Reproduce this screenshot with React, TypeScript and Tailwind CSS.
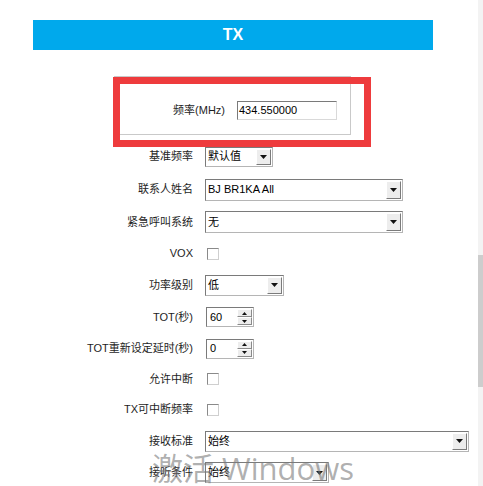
import React from 'react';

type Row =
  | { label: string; h: string; kind: 'select'; value: string; w: string; sh: string }
  | { label: string; h: string; kind: 'spin'; value: string }
  | { label: string; h: string; kind: 'check' };

// row heights follow the reference's spacing between row centres
const ROWS: Row[] = [
  { label: '基准频率', h: 'h-[33px]', kind: 'select', value: '默认值', w: 'w-[68px]', sh: 'h-[20px]' },
  { label: '联系人姓名', h: 'h-[33px]', kind: 'select', value: 'BJ BR1KA All', w: 'w-[198px]', sh: 'h-[22px]' },
  { label: '紧急呼叫系统', h: 'h-[32px]', kind: 'select', value: '无', w: 'w-[198px]', sh: 'h-[22px]' },
  { label: 'VOX', h: 'h-[31px]', kind: 'check' },
  { label: '功率级别', h: 'h-[32px]', kind: 'select', value: '低', w: 'w-[79px]', sh: 'h-[21px]' },
  { label: 'TOT(秒)', h: 'h-[32px]', kind: 'spin', value: '60' },
  { label: 'TOT重新设定延时(秒)', h: 'h-[31px]', kind: 'spin', value: '0' },
  { label: '允许中断', h: 'h-[30px]', kind: 'check' },
  { label: 'TX可中断频率', h: 'h-[31px]', kind: 'check' },
  { label: '接收标准', h: 'h-[32px]', kind: 'select', value: '始终', w: 'w-[264px]', sh: 'h-[21px]' },
  { label: '接听条件', h: 'h-[31px]', kind: 'select', value: '始终', w: 'w-[124px]', sh: 'h-[21px]' },
];

function Arrow({ up = false, small = false }: { up?: boolean; small?: boolean }) {
  const w = small ? 5 : 7;
  const h = small ? 3 : 4;
  return (
    <svg width={w} height={h} viewBox={`0 0 ${w} ${h}`}>
      <path d={up ? `M0 ${h}H${w}L${w / 2} 0Z` : `M0 0H${w}L${w / 2} ${h}Z`} fill="#111" />
    </svg>
  );
}

function Select({ value, w, sh }: { value: string; w: string; sh: string }) {
  return (
    <div
      className={`flex ${w} ${sh} border border-t-[#7a7a7a] border-l-[#7a7a7a] border-r-[#b5b5b5] border-b-[#b5b5b5] bg-white`}
    >
      <span className="flex flex-1 items-center overflow-hidden whitespace-nowrap pl-[2px] text-[11px] text-black">
        {value}
      </span>
      <span className="m-px flex w-[15px] items-center justify-center border border-t-white border-l-white border-r-[#7b7b7b] border-b-[#7b7b7b] bg-[#ededed]">
        <Arrow />
      </span>
    </div>
  );
}

function Spin({ value }: { value: string }) {
  return (
    <div className="ml-px flex h-[20px] w-[48px] border border-t-[#7a7a7a] border-l-[#7a7a7a] border-r-[#b5b5b5] border-b-[#b5b5b5] bg-white">
      <span className="flex flex-1 items-center pl-[3px] text-[11px] text-black">{value}</span>
      <div className="m-px flex w-[15px] flex-col">
        <span className="flex flex-1 items-center justify-center border border-t-white border-l-white border-r-[#8a8a8a] border-b-[#8a8a8a] bg-[#ededed]">
          <Arrow up small />
        </span>
        <span className="flex flex-1 items-center justify-center border border-t-white border-l-white border-r-[#8a8a8a] border-b-[#8a8a8a] bg-[#ededed]">
          <Arrow small />
        </span>
      </div>
    </div>
  );
}

function Check() {
  return (
    <span className="ml-[2px] block h-[12px] w-[12px] border border-t-[#8a8a8a] border-l-[#8a8a8a] border-r-[#cfcfcf] border-b-[#cfcfcf] bg-white" />
  );
}

export default function App() {
  return (
    <div className="relative flex h-[486px] w-[483px] overflow-hidden bg-white font-['Liberation_Sans','Noto_Sans_CJK_SC',sans-serif] text-[#1e1e1e]">
      <div className="w-[478px]">
        {/* TX header */}
        <div className="ml-[33px] mt-[20px] flex h-[30px] w-[400px] items-center justify-center bg-[#00a9ec]">
          <span className="text-[16px] font-bold text-white">TX</span>
        </div>

        {/* frequency box */}
        <div className="ml-[114px] mt-[26px] h-[59px] w-[237px] border border-[#c9c9c9] pt-[24px]">
          <div className="flex items-center">
            <span className="w-[110px] text-right text-[11px]">频率(MHz)</span>
            <div className="ml-[12px] flex h-[19px] w-[100px] items-center border border-t-[#7a7a7a] border-l-[#7a7a7a] border-r-[#d9d9d9] border-b-[#d9d9d9] bg-white pl-px text-[11px] text-black">
              434.550000
            </div>
          </div>
        </div>

        {/* settings rows */}
        <div className="mt-[5px] flex flex-col">
          {ROWS.map((r) => (
            <div key={r.label} className={`flex items-center ${r.h}`}>
              <span className="w-[193px] text-right text-[11px]">{r.label}</span>
              <div className="ml-[12px]">
                {r.kind === 'select' && <Select value={r.value} w={r.w} sh={r.sh} />}
                {r.kind === 'spin' && <Spin value={r.value} />}
                {r.kind === 'check' && <Check />}
              </div>
            </div>
          ))}
        </div>
      </div>

      {/* scrollbar */}
      <div className="flex w-[5px] flex-col bg-[#f3f3f3]">
        <div className="h-[255px]" />
        <div className="h-[132px] bg-[#cdcdcd]" />
      </div>

      {/* red highlight annotation */}
      <div className="absolute left-[113px] top-[77px] h-[70px] w-[258px] border-[7px] border-[#ee3b3d]" />

      {/* activation watermark */}
      <div className="pointer-events-none absolute left-[152px] top-[453px] whitespace-nowrap font-['Open_Sans','Noto_Sans_CJK_SC',sans-serif] text-[31px] leading-none text-[#7a7a7a99]">
        激活 Windows
      </div>
    </div>
  );
}
